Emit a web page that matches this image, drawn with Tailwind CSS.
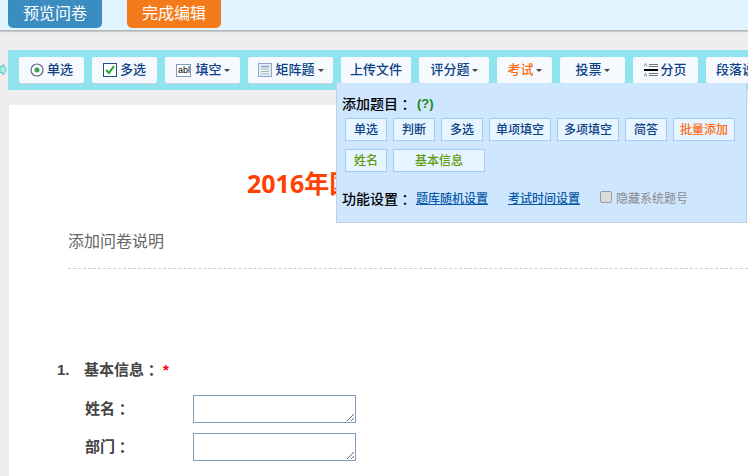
<!DOCTYPE html>
<html lang="zh">
<head>
<meta charset="utf-8">
<script src="https://cdn.jsdelivr.net/npm/@tailwindcss/browser@4"></script>
</head>
<body class="m-0 bg-[#eeeeee] font-['Liberation_Sans','Noto_Sans_CJK_SC',sans-serif]">
<div class="relative w-[748px] h-[476px] overflow-hidden bg-[#eeeeee]">
  <!-- top bar -->
  <div class="h-[31px] bg-[#e0f5ff] border-b border-[#b4b8ba] shadow-[0_1px_1px_#c8c8c8] flex items-start gap-[25px] pl-2">
    <div class="w-[94px] h-[28px] rounded-b-[5px] bg-[#3b8cc0] text-white text-[16px] flex items-center justify-center">预览问卷</div>
    <div class="w-[94px] h-[28px] rounded-b-[5px] bg-[#f47b1b] text-white text-[16px] flex items-center justify-center">完成编辑</div>
  </div>
  <!-- toolbar -->
  <div class="relative ml-2 mt-[19px] h-[40px] bg-[#8fe4f0] flex items-center gap-2 pl-[11px] overflow-hidden text-[13px] font-medium text-[#0c3f86] whitespace-nowrap">
    <div class="shrink-0 w-[65px] h-[26px] bg-[#f6faff] rounded-[2px] shadow-[0_1px_0_#c8d4dc] flex items-center justify-center gap-[3px]">
      <svg width="14" height="14" viewBox="0 0 14 14"><circle cx="7" cy="7" r="6" fill="#fff" stroke="#5b6f88" stroke-width="1.2"/><circle cx="7" cy="7" r="2.5" fill="#3aa34a"/></svg>单选</div>
    <div class="shrink-0 w-[65px] h-[26px] bg-[#f6faff] rounded-[2px] shadow-[0_1px_0_#c8d4dc] flex items-center justify-center gap-[3px]">
      <svg width="14" height="14" viewBox="0 0 14 14"><rect x=".5" y=".5" width="13" height="13" fill="#fff" stroke="#1d4f80"/><path d="M3 7l3 3 5-7" fill="none" stroke="#22a52c" stroke-width="2"/></svg>多选</div>
    <div class="shrink-0 w-[75px] h-[26px] bg-[#f6faff] rounded-[2px] shadow-[0_1px_0_#c8d4dc] flex items-center justify-center gap-[4px] pl-[1px]">
      <span class="w-[15px] h-[13px] border border-[#7f9cc0] bg-white text-[9px] leading-[11px] text-black text-center font-medium">abl</span>填空<span class="-ml-[2px] w-0 h-0 border-x-[3px] border-x-transparent border-t-[3px] border-t-[#444]"></span></div>
    <div class="shrink-0 w-[85px] h-[26px] bg-[#f6faff] rounded-[2px] shadow-[0_1px_0_#c8d4dc] flex items-center justify-center gap-[3px] pl-[1px]">
      <svg width="14" height="14" viewBox="0 0 14 14"><rect x=".5" y=".5" width="13" height="13" fill="#e4edf8" stroke="#8aa6d0"/><path d="M3 3.500h8" stroke="#8aa6d0" stroke-width="1.500"/><path d="M3 6h8M3 8.500h8M3 11h8" stroke="#a8c0a8"/></svg>矩阵题<span class="w-0 h-0 border-x-[3px] border-x-transparent border-t-[3px] border-t-[#444]"></span></div>
    <div class="shrink-0 w-[70px] h-[26px] bg-[#f6faff] rounded-[2px] shadow-[0_1px_0_#c8d4dc] flex items-center justify-center">上传文件</div>
    <div class="shrink-0 w-[70px] h-[26px] bg-[#f6faff] rounded-[2px] shadow-[0_1px_0_#c8d4dc] flex items-center justify-center gap-[2px]">评分题<span class="w-0 h-0 border-x-[3px] border-x-transparent border-t-[3px] border-t-[#444]"></span></div>
    <div class="shrink-0 w-[55px] h-[26px] bg-[#f6faff] rounded-[2px] shadow-[0_1px_0_#c8d4dc] flex items-center justify-center gap-[2px] text-[#ff6a13]">考试<span class="w-0 h-0 border-x-[3px] border-x-transparent border-t-[3px] border-t-[#444]"></span></div>
    <div class="shrink-0 w-[65px] h-[26px] bg-[#f6faff] rounded-[2px] shadow-[0_1px_0_#c8d4dc] flex items-center justify-center gap-[2px]">投票<span class="w-0 h-0 border-x-[3px] border-x-transparent border-t-[3px] border-t-[#444]"></span></div>
    <div class="shrink-0 w-[65px] h-[26px] bg-[#f6faff] rounded-[2px] shadow-[0_1px_0_#c8d4dc] flex items-center justify-center gap-[2px]">
      <svg width="14" height="14" viewBox="0 0 14 14"><path d="M5 1.500h9M5 3.500h9M5 10.500h9M5 12.500h9" stroke="#777" stroke-width="1"/><path d="M0 3.500L1.500 .5 3 3.500M0 13.500L1.500 10.500 3 13.500" fill="none" stroke="#777" stroke-width=".8"/><path d="M0 7h14" stroke="#000" stroke-width="2"/></svg>分页</div>
    <div class="shrink-0 w-[65px] h-[26px] bg-[#f6faff] rounded-[2px] shadow-[0_1px_0_#c8d4dc] flex items-center justify-start pl-[10px]">段落说明</div>
  </div>
  <!-- arrow at the left edge -->
  <svg class="absolute left-0 top-[63px]" width="7" height="13" viewBox="0 0 7 13"><path d="M0 3.500h3V1l3.500 5.500L3 12V9.500H0z" fill="#b4ecec" stroke="#5cc8c8" stroke-width="1"/></svg>
  <!-- page -->
  <div class="ml-[9px] mt-[15px] h-[400px] bg-white relative">
    <div class="pt-[60px] pl-[238px] text-[25px] leading-[36px] font-bold text-[#ff4000] whitespace-nowrap font-['Noto_Sans','Noto_Sans_CJK_SC',sans-serif]">2016年国庆考试</div>
    <div class="mt-[30px] ml-[59px] pb-[15px] border-b border-dashed border-[#cccccc] text-[16px] leading-[22px] text-[#666666]">添加问卷说明</div>
    <div class="mt-[91px] ml-[48px] flex items-center h-[20px] text-[15px] font-bold text-[#444444]">
      <span class="w-[27px]">1.</span><span>基本信息</span><span class="w-[15px] font-['Noto_Sans_CJK_TC']">：</span><span class="ml-[4px] text-[#ff0000]">*</span>
    </div>
    <div class="mt-[15px] ml-[76px] flex items-center h-[28px] text-[15px] font-bold text-[#444444]">
      <span class="w-[30px] shrink-0">姓名</span><span class="w-[78px] shrink-0 font-['Noto_Sans_CJK_TC']">：</span>
      <textarea class="w-[163px] h-[28px] border border-[#7f9db9] bg-white block"></textarea>
    </div>
    <div class="mt-[10px] ml-[76px] flex items-center h-[28px] text-[15px] font-bold text-[#444444]">
      <span class="w-[30px] shrink-0">部门</span><span class="w-[78px] shrink-0 font-['Noto_Sans_CJK_TC']">：</span>
      <textarea class="w-[163px] h-[28px] border border-[#7f9db9] bg-white block"></textarea>
    </div>
  </div>
  <!-- popup -->
  <div class="absolute left-[336px] top-[83px] w-[411px] h-[140px] bg-[#cfe6ff] border border-t-0 border-[#c2cfdc] pl-[5px] pt-[12px] text-[12px] text-black whitespace-nowrap">
    <div class="flex items-center h-[18px] text-[14px] font-medium"><span>添加题目</span><span class="font-['Noto_Sans_CJK_TC']">：</span><span class="ml-[5px] text-[#1a8a1a] text-[13px] font-bold">(?)</span></div>
    <div class="mt-[5px] flex gap-[6px] ml-[3px] font-medium text-[#0c3f86]">
      <div class="w-[42px] h-[23px] bg-[#e6f5ff] border border-[#a3cbfa] flex items-center justify-center">单选</div>
      <div class="w-[42px] h-[23px] bg-[#e6f5ff] border border-[#a3cbfa] flex items-center justify-center">判断</div>
      <div class="w-[42px] h-[23px] bg-[#e6f5ff] border border-[#a3cbfa] flex items-center justify-center">多选</div>
      <div class="w-[62px] h-[23px] bg-[#e6f5ff] border border-[#a3cbfa] flex items-center justify-center">单项填空</div>
      <div class="w-[62px] h-[23px] bg-[#e6f5ff] border border-[#a3cbfa] flex items-center justify-center">多项填空</div>
      <div class="w-[42px] h-[23px] bg-[#e6f5ff] border border-[#a3cbfa] flex items-center justify-center">简答</div>
      <div class="w-[62px] h-[23px] bg-[#e6f5ff] border border-[#a3cbfa] flex items-center justify-center text-[#ff6a13]">批量添加</div>
    </div>
    <div class="mt-[8px] flex gap-[6px] ml-[3px] font-medium text-[#5f9a10]">
      <div class="w-[42px] h-[23px] bg-[#e6f5ff] border border-[#a3cbfa] flex items-center justify-center">姓名</div>
      <div class="w-[92px] h-[23px] bg-[#e6f5ff] border border-[#a3cbfa] flex items-center justify-center">基本信息</div>
    </div>
    <div class="mt-[18px] flex items-center h-[18px]">
      <span class="font-medium text-[14px] shrink-0">功能设置</span><span class="w-[18px] shrink-0 text-[14px] font-medium font-['Noto_Sans_CJK_TC']">：</span>
      <a class="text-[#0a5aa8] underline font-medium w-[92px]">题库随机设置</a>
      <a class="text-[#0a5aa8] underline font-medium w-[92px]">考试时间设置</a>
      <span class="w-[12px] h-[12px] rounded-[2px] bg-[#dcdcdc] border border-[#9a9a9a] -mt-[4px]"></span>
      <span class="ml-[4px] text-[#8a8a8a]">隐藏系统题号</span>
    </div>
  </div>
</div>
</body>
</html>
